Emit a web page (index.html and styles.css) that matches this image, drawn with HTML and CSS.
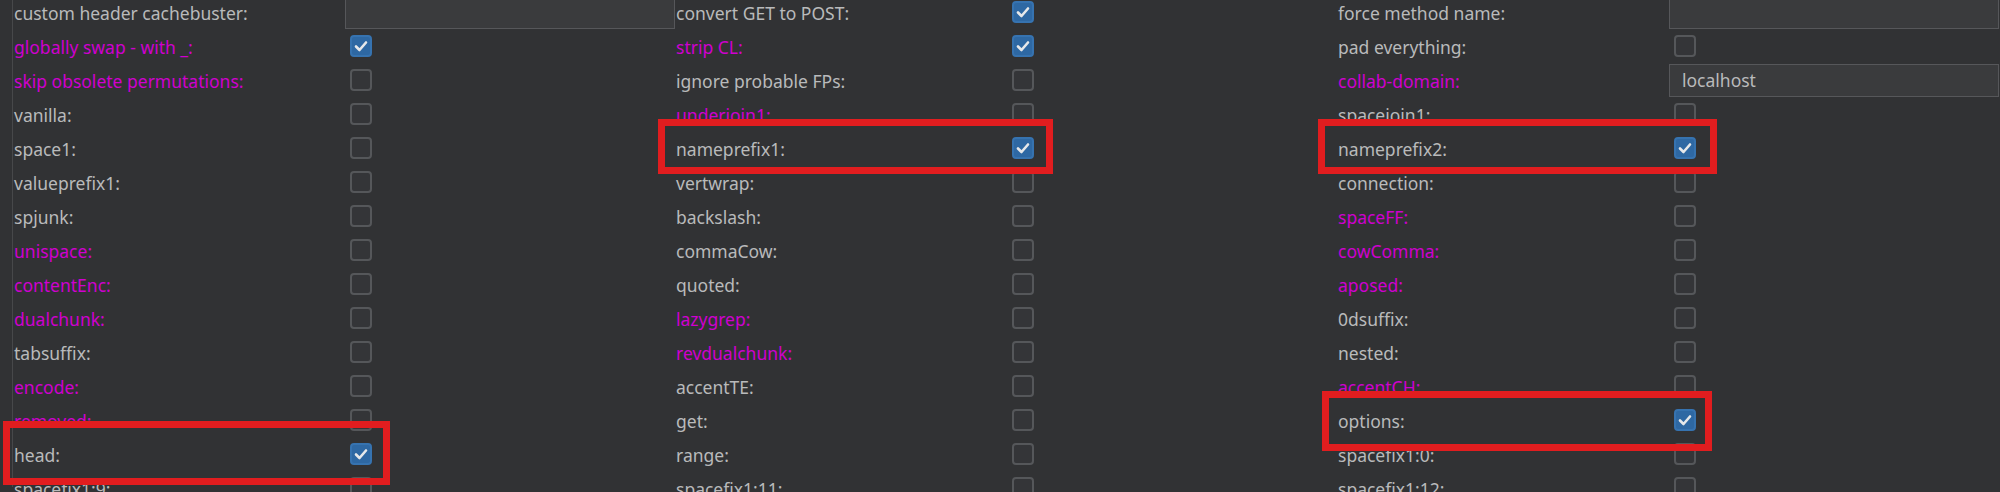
FILE: index.html
```html
<!DOCTYPE html>
<html lang="en">
<head>
  <meta charset="UTF-8">
  <title>Settings</title>
  <link rel="stylesheet" href="styles.css">
</head>
<body>
    <div class="panel">
        <div class="settings" id="settings"></div>
    </div>

    <!-- red markers drawn over the screenshot -->
    <div class="mark mark-nameprefix1"></div>
    <div class="mark mark-nameprefix2"></div>
    <div class="mark mark-head"></div>
    <div class="mark mark-options"></div>

    <script>
        // label, colour (m = magenta), control: t = text field, c = checked, u = unchecked
        const rows = [
            [['custom header cachebuster:', '', 't'], ['convert GET to POST:', '', 'c'], ['force method name:', '', 't']],
            [['globally swap - with _:', 'm', 'c'], ['strip CL:', 'm', 'c'], ['pad everything:', '', 'u']],
            [['skip obsolete permutations:', 'm', 'u'], ['ignore probable FPs:', '', 'u'], ['collab-domain:', 'm', 't', 'localhost']],
            [['vanilla:', '', 'u'], ['underjoin1:', 'm', 'u'], ['spacejoin1:', '', 'u']],
            [['space1:', '', 'u'], ['nameprefix1:', '', 'c'], ['nameprefix2:', '', 'c']],
            [['valueprefix1:', '', 'u'], ['vertwrap:', '', 'u'], ['connection:', '', 'u']],
            [['spjunk:', '', 'u'], ['backslash:', '', 'u'], ['spaceFF:', 'm', 'u']],
            [['unispace:', 'm', 'u'], ['commaCow:', '', 'u'], ['cowComma:', 'm', 'u']],
            [['contentEnc:', 'm', 'u'], ['quoted:', '', 'u'], ['aposed:', 'm', 'u']],
            [['dualchunk:', 'm', 'u'], ['lazygrep:', 'm', 'u'], ['0dsuffix:', '', 'u']],
            [['tabsuffix:', '', 'u'], ['revdualchunk:', 'm', 'u'], ['nested:', '', 'u']],
            [['encode:', 'm', 'u'], ['accentTE:', '', 'u'], ['accentCH:', 'm', 'u']],
            [['removed:', 'm', 'u'], ['get:', '', 'u'], ['options:', '', 'c']],
            [['head:', '', 'c'], ['range:', '', 'u'], ['spacefix1:0:', '', 'u']],
            [['spacefix1:9:', '', 'u'], ['spacefix1:11:', '', 'u'], ['spacefix1:12:', '', 'u']]
        ];

        const tick = '<svg viewBox="0 0 22 22"><polyline points="6,11.5 9.5,15 16,7.5"/></svg>';
        const settings = document.getElementById('settings');

        rows.forEach(function(row) {
            row.forEach(function(item) {
                const label = document.createElement('div');
                label.className = 'label' + (item[1] === 'm' ? ' modified' : '');
                label.textContent = item[0];
                settings.appendChild(label);

                const cell = document.createElement('div');
                cell.className = 'control';
                if (item[2] === 't') {
                    const field = document.createElement('div');
                    field.className = 'field';
                    field.textContent = item[3] || '';
                    cell.appendChild(field);
                } else {
                    const box = document.createElement('div');
                    box.className = 'checkbox' + (item[2] === 'c' ? ' checked' : '');
                    if (item[2] === 'c') box.innerHTML = tick;
                    cell.appendChild(box);
                }
                settings.appendChild(cell);
            });
        });
    </script>
</body>
</html>
```

FILE: styles.css
```css
* {
  margin: 0;
  padding: 0;
  box-sizing: border-box;
}

html, body {
  height: 100%;
  overflow: hidden;
}

body {
  position: relative;
  background: #313234;
  font-family: 'Noto Sans', 'Open Sans', sans-serif;
  font-size: 17.5px;
  color: #b9babb;
}

.panel {
  height: 100%;
  margin-left: 12px;
  padding-left: 1px;
  border-left: 1px solid #47484a;
}

.settings {
  display: grid;
  grid-template-columns: repeat(6, 331px);
  grid-auto-rows: 34px;
  margin-top: -5px;
}

.label {
  display: flex;
  align-items: center;
  padding-top: 2px;
  line-height: 22px;
  white-space: nowrap;
}

.label.modified {
  color: #cf00cf;
}

.control {
  display: flex;
  align-items: center;
}

.checkbox {
  width: 22px;
  height: 22px;
  margin-left: 5px;
  border: 2px solid #55575a;
  border-radius: 4px;
  background: #343538;
}

.checkbox.checked {
  border-color: #3673b0;
  background: #2e68a3;
}

.checkbox svg {
  display: block;
  width: 22px;
  height: 22px;
  margin: -2px;
}

.checkbox svg polyline {
  fill: none;
  stroke: #e6e8ea;
  stroke-width: 2.6;
  stroke-linecap: round;
  stroke-linejoin: round;
}

.field {
  width: 330px;
  height: 33px;
  padding: 4px 12px 0;
  border: 1px solid #56575a;
  background: #3a3b3d;
  line-height: 22px;
}

/* annotation rectangles */
.mark {
  position: absolute;
  border: 7px solid #e11d1f;
}

.mark-nameprefix1 { left: 658px; top: 119px; width: 395px; height: 55px; }
.mark-nameprefix2 { left: 1318px; top: 119px; width: 399px; height: 55px; }
.mark-head { left: 3px; top: 421px; width: 387px; height: 64px; }
.mark-options { left: 1322px; top: 391px; width: 390px; height: 60px; }
```
